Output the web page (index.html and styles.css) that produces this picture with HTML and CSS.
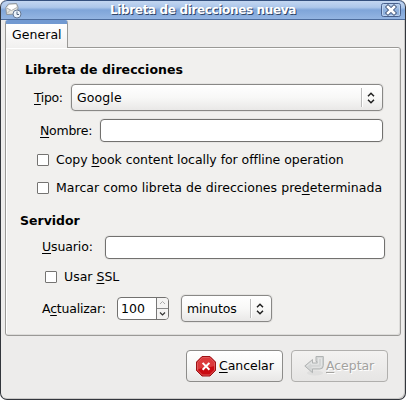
FILE: index.html
```
<!DOCTYPE html>
<html lang="es">
<head>
<meta charset="utf-8">
<title>Libreta de direcciones nueva</title>
<link rel="stylesheet" href="styles.css">
</head>
<body>
<div class="window">
  <header class="titlebar">
    <svg class="app-icon" width="17" height="17" viewBox="0 0 17 17">
      <path d="M.8 5.500 3.500 2 11.500 1.500 13 5 12.500 12 1.500 12.500Z" fill="#e6e6e1" stroke="#8c949d"/>
      <path d="M2.500 5.500 4.500 3 10.800 2.700 11.500 5.200 6.500 8Z" fill="#fff"/>
      <path d="M1.500 6 6.500 8.500 12 5.500M2 11.500 5.500 8" fill="none" stroke="#a4a7a8" stroke-width=".8"/>
      <circle cx="12" cy="12" r="4" fill="#eaf2fb" stroke="#647794"/>
      <path d="M12 9.500v3h2" fill="none" stroke="#53647e"/>
    </svg>
    <h1 class="title">Libreta de direcciones nueva</h1>
    <svg class="close" width="20" height="14" viewBox="0 0 20 14">
      <rect x=".5" y=".5" width="19" height="13" rx="2" fill="#a6c2e6" fill-opacity=".35" stroke="#48608c"/>
      <rect x="1.500" y="1.500" width="17" height="11" rx="1" fill="none" stroke="#bdd3ef"/>
      <path d="M7 4 13 10M13 4 7 10" stroke="#45597d" stroke-width="4.400" stroke-linecap="square"/>
      <path d="M7 4 13 10M13 4 7 10" stroke="#fff" stroke-width="2.600" stroke-linecap="square"/>
    </svg>
  </header>
  <main class="content">
    <div class="tab"><span class="t">General</span></div>
    <section class="panel">
      <h2 class="heading book"><span class="t">Libreta de direcciones</span></h2>
      <div class="row type">
        <label class="t"><u>T</u>ipo:</label>
        <div class="combo"><span class="t">Google</span><i class="sep"></i>
          <svg width="8" height="12" viewBox="0 0 8 12"><path d="M1 4.300 4 1.300 7 4.300M1 7.700 4 10.700 7 7.700" fill="none" stroke="#222" stroke-width="1.500"/></svg></div>
      </div>
      <div class="row name"><label class="t"><u>N</u>ombre:</label><div class="entry"></div></div>
      <div class="row check copy"><i class="box"></i><span class="t">Copy <u>b</u>ook content locally for offline operation</span></div>
      <div class="row check mark"><i class="box"></i><span class="t">Marcar como libreta de direcciones pre<u>d</u>eterminada</span></div>
      <h2 class="heading server"><span class="t">Servidor</span></h2>
      <div class="row user"><label class="t"><u>U</u>suario:</label><div class="entry"></div></div>
      <div class="row check ssl"><i class="box"></i><span class="t">Usar <u>S</u>SL</span></div>
      <div class="row refresh">
        <label class="t">A<u>c</u>tualizar:</label>
        <div class="spin"><span class="t">100</span>
          <div class="steps">
            <svg width="11" height="10" viewBox="0 0 11 10"><path d="M3 6 5.500 3.500 8 6" fill="none" stroke="#aaa"/></svg>
            <svg width="11" height="10" viewBox="0 0 11 10"><path d="M3 3.500 5.500 6 8 3.500" fill="none" stroke="#333" stroke-width="1.200"/></svg>
          </div></div>
        <div class="combo unit"><span class="t">minutos</span><i class="sep"></i>
          <svg width="8" height="12" viewBox="0 0 8 12"><path d="M1 4.300 4 1.300 7 4.300M1 7.700 4 10.700 7 7.700" fill="none" stroke="#222" stroke-width="1.500"/></svg></div>
      </div>
    </section>
    <footer class="actions">
      <div class="button">
        <svg width="20" height="21" viewBox="0 0 20 21">
          <path d="M6 .5h8l5.500 5.500v8.500l-5.500 5.500h-8l-5.500-5.500v-8.500z" fill="#c90b12" stroke="#9c1115"/>
          <path d="M6.400 1.500h7.200l4.900 4.900v3.600c-5 2-11 0-17 4v-7.600z" fill="#dc3a3c"/>
          <path d="M6.400 1.500h7.200l4.900 4.900v7.700l-4.900 4.900h-7.200l-4.900-4.900v-7.700z" fill="none" stroke="#e06a6a" stroke-width=".8"/>
          <path d="M7.300 7.600 12.700 13M12.700 7.600 7.300 13" stroke="#fff" stroke-width="2" stroke-linecap="square"/>
        </svg>
        <span class="t"><u>C</u>ancelar</span>
      </div>
      <div class="button disabled">
        <svg width="20" height="21" viewBox="0 0 20 21">
          <ellipse cx="11" cy="17" rx="8" ry="2.500" fill="#d9d9d8" opacity=".6"/>
          <path d="M.8 10 8.500 3.500v3.500h4.500v-1.500h-1v-5h7.300v9q0 3.500-3.500 3.500h-7.300v3.700z" fill="#d4d6d6" stroke="#b0b3b3"/>
          <path d="M3 10 7.500 6.300v2h7v-6h3v7q0 2-2 2h-8" fill="none" stroke="#e8eaea" stroke-width=".8"/>
        </svg>
        <span class="t"><u>A</u>ceptar</span>
      </div>
    </footer>
  </main>
</div>
</body>
</html>
```
FILE: styles.css
```
* { box-sizing: border-box; }
body { margin: 0; background: #fff; font: 12.5px/16px "DejaVu Sans", sans-serif; color: #000; }
.window { width: 406px; height: 400px; border: 1px solid #33363c; border-top: 0; border-radius: 7px; background: #edeceb; overflow: hidden; box-shadow: inset -1px -1px 0 #c9c8c7; }
.titlebar { height: 20px; margin: 0 -1px; padding: 0 5px; display: flex; align-items: flex-start; justify-content: space-between; border: 1px solid #34507e; border-bottom-color: #4d6c9c; border-radius: 7px 7px 0 0; background: linear-gradient(#c3d6f1 0, #adc7ea 35%, #7fa5d9 50%, #94b5e2 100%); }
.app-icon { margin: 1px 0 0 -1px; }
.title { margin: 1px 0 0 3px; font-size: 12px; line-height: 16px; color: #fff; letter-spacing: -.35px; text-shadow: 1px 1px 0 #304568; white-space: nowrap; }
.close { margin: 2px -1px 0 0; }
.content { padding: 0 4px; }
.tab { position: relative; z-index: 1; width: 63px; height: 28px; padding: 3px 0 0 6px; border: 1px solid #9a9996; border-top: 4px solid #7199d1; border-bottom: 0; border-radius: 3px 3px 0 0; background: linear-gradient(#fff, #f1f0ef); letter-spacing: .05px; }
.panel { width: 396px; height: 289px; margin-top: -1px; padding: 14px 15px 0 14px; border: 1px solid #9a9996; border-radius: 0 3px 3px 3px; background: #f1f0ee; box-shadow: inset 1px 1px 0 #fff, inset -1px -1px 0 #dddcda; }
.t { white-space: nowrap; }
u { text-decoration: underline; text-decoration-thickness: 1px; text-underline-offset: 2px; text-decoration-skip-ink: none; }
.heading { margin: 0; height: 16px; font-size: 12.5px; line-height: 16px; }
.book { padding-left: 5px; letter-spacing: .06px; }
.row { display: flex; align-items: center; height: 27px; }
.row label { flex: none; }
.type { margin-top: 6px; padding-left: 14px; }
.type label { width: 37px; letter-spacing: -.4px; }
.combo { flex: none; display: flex; align-items: center; width: 312px; height: 27px; padding: 0 7px 0 5px; border: 1px solid #898886; border-radius: 4px; background: linear-gradient(#fff, #f8f8f7 50%, #e9e8e7); box-shadow: 0 0 0 1px #e5e4e2; }
.combo .t { letter-spacing: .1px; }
.combo .sep { width: 2px; height: 19px; margin-left: auto; margin-right: 4px; border-left: 1px solid #bbb; border-right: 1px solid #fff; }
.name { height: 23px; margin-top: 8px; padding-left: 20px; }
.name label { width: 60px; letter-spacing: -.25px; }
.entry { width: 283px; height: 23px; border: 1px solid #72716f; border-radius: 4px; background: #fff; box-shadow: 0 0 0 1px #e7e6e4; }
.check { height: 16px; }
.box { flex: none; width: 12px; height: 12px; margin-right: 7px; border: 1px solid #757472; border-radius: 1px; background: #fff; }
.copy { margin-top: 10px; padding-left: 17px; letter-spacing: -.05px; }
.mark { margin-top: 12px; padding-left: 17px; letter-spacing: .04px; }
.server { margin-top: 17px; }
.user { height: 23px; margin-top: 7px; padding-left: 22px; }
.user label { width: 63px; padding-bottom: 2px; letter-spacing: -.12px; }
.user .entry { width: 280px; }
.ssl { margin-top: 10px; padding-left: 25px; }
.refresh { margin-top: 10px; padding-left: 22px; }
.refresh label { width: 75px; letter-spacing: -.2px; }
.spin { display: flex; align-items: center; justify-content: space-between; width: 52px; height: 23px; padding-left: 3px; border: 1px solid #72716f; border-radius: 4px; background: #fff; overflow: hidden; }
.steps { display: flex; flex-direction: column; width: 12px; height: 21px; border-left: 1px solid #777; background: #f4f3f2; }
.steps svg + svg { border-top: 1px solid #888; height: 11px; }
.unit { width: 91px; margin-left: 12px; }
.unit .t { letter-spacing: -.15px; }
.actions { display: flex; justify-content: flex-end; gap: 8px; padding: 14px 13px 0 0; }
.button { display: flex; align-items: center; width: 97px; height: 32px; padding-left: 9px; border: 1px solid #8d8c8a; border-radius: 4px; background: linear-gradient(#fff, #f7f7f6 50%, #e8e7e6); letter-spacing: -.05px; }
.button svg { flex: none; margin-right: 3px; }
.disabled { padding-left: 12px; border-color: #b0afad; background: linear-gradient(#f3f2f1, #e6e5e4); color: #a3a29f; text-shadow: 1px 1px 0 #fff; }
.disabled svg { margin-right: 2px; }
```
